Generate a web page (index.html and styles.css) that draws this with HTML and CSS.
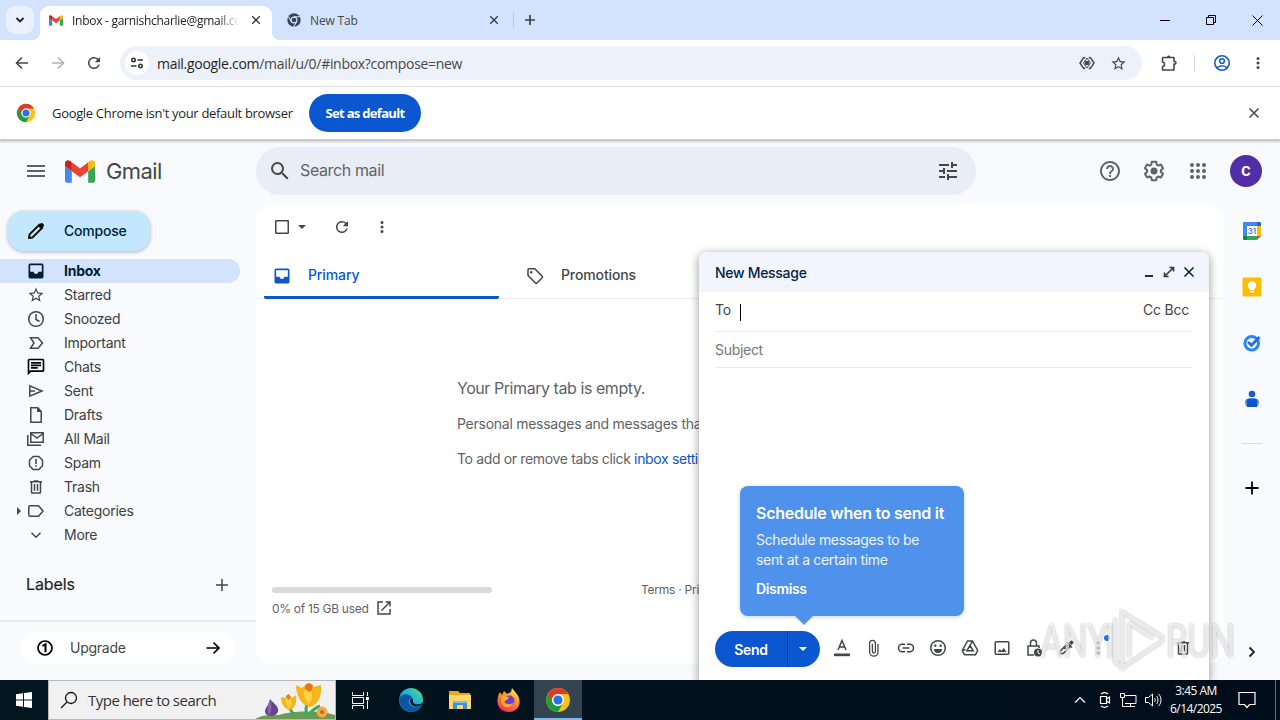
FILE: index.html
```
<!DOCTYPE html>
<html lang="en">
<head>
  <meta charset="UTF-8" />
  <meta name="viewport" content="width=device-width, initial-scale=1.0"/>
  <title>Inbox - Gmail</title>
  <link rel="stylesheet" href="styles.css">
</head>

<body>
  <!-- shared icons -->
  <svg class="defs" width="0" height="0">
    <symbol id="i-close" viewBox="0 0 12 12"><path d="M1.5 1.5l9 9M10.5 1.5l-9 9" fill="none" stroke="currentColor" stroke-width="1.5"/></symbol>
    <symbol id="i-dots" viewBox="0 0 24 24"><path d="M12 8a2 2 0 1 0 0-4 2 2 0 0 0 0 4zm0 2a2 2 0 1 0 0 4 2 2 0 0 0 0-4zm0 6a2 2 0 1 0 0 4 2 2 0 0 0 0-4z"/></symbol>
    <symbol id="i-refresh" viewBox="0 0 24 24"><path d="M17.65 6.35A7.958 7.958 0 0 0 12 4c-4.42 0-7.99 3.58-7.99 8s3.57 8 7.99 8c3.73 0 6.84-2.55 7.73-6h-2.08A5.99 5.99 0 0 1 12 18c-3.31 0-6-2.69-6-6s2.69-6 6-6c1.66 0 3.14.69 4.22 1.78L13 11h7V4l-2.35 2.35z"/></symbol>
    <symbol id="i-star" viewBox="0 0 24 24"><path d="M22 9.24l-7.19-.62L12 2 9.19 8.63 2 9.24l5.46 4.73L5.82 21 12 17.27 18.18 21l-1.63-7.03L22 9.24zM12 15.4l-3.76 2.27 1-4.28-3.32-2.88 4.38-.38L12 6.1l1.71 4.04 4.38.38-3.32 2.88 1 4.28L12 15.4z"/></symbol>
    <symbol id="i-inbox" viewBox="0 0 24 24"><path d="M19 3H5a2 2 0 0 0-2 2v14a2 2 0 0 0 2 2h14a2 2 0 0 0 2-2V5a2 2 0 0 0-2-2zm0 10h-4.200c0 1.500-1.250 2.700-2.800 2.700S9.200 14.500 9.200 13H5V5h14v8z"/></symbol>
    <symbol id="i-trash" viewBox="0 0 24 24"><path d="M15 3H9v1H4v2h1v13c0 1.1.9 2 2 2h10c1.1 0 2-.9 2-2V6h1V4h-5V3zM7 6h10v13H7V6zm2 2h2v9H9V8zm4 0h2v9h-2V8z"/></symbol>
    <symbol id="i-gmail" viewBox="0 0 88 66"><path fill="#4285f4" d="M6 66h14V32L0 17v43c0 3.3 2.7 6 6 6z"/><path fill="#34a853" d="M68 66h14c3.3 0 6-2.7 6-6V17L68 32z"/><path fill="#fbbc04" d="M68 6v26l20-15V9c0-7.400-8.500-11.700-14.400-7.200z"/><path fill="#ea4335" d="M20 32V6l24 18L68 6v26L44 50z"/><path fill="#c5221f" d="M0 9v8l20 15V6l-5.600-4.200C8.500-2.700 0 1.600 0 9z"/></symbol>
    <symbol id="i-chrome" viewBox="0 0 48 48"><circle cx="24" cy="24" r="22" fill="#fbc116"/><path fill="#db3a2e" d="M4.950 13a22 22 0 0 1 38.100 0H24a11 11 0 0 0-9.500 16.500z"/><path fill="#229a45" d="M4.950 13a22 22 0 0 0 19.050 33l9.530-16.500a11 11 0 0 1-19.060 0z"/><circle cx="24" cy="24" r="11" fill="#fff"/><circle cx="24" cy="24" r="8.500" fill="#2572eb"/></symbol>
  </svg>

  <div class="screen">
    <div class="tabstrip">
      <div class="tab-search"><svg width="10" height="8" viewBox="0 0 10 8"><path d="M1.500 2l3.500 3.500L8.500 2" fill="none" stroke="#1f1f1f" stroke-width="1.800"/></svg></div>
      <div class="tab active">
        <svg width="14" height="11"><use href="#i-gmail"/></svg>
        <span class="tab-title fade">Inbox - garnishcharlie@gmail.co</span>
        <svg class="tab-x" width="10" height="10"><use href="#i-close"/></svg>
      </div>
      <div class="tab">
        <svg width="14" height="14" viewBox="0 0 48 48"><circle cx="24" cy="24" r="23" fill="#3c4451"/><circle cx="24" cy="24" r="10" fill="none" stroke="#d5e3fd" stroke-width="4"/><path d="M24 13h20M14.500 29.500L5 12M33.500 29.500L23 47" stroke="#d5e3fd" stroke-width="3.500"/></svg>
        <span class="tab-title">New Tab</span>
        <svg class="tab-x" width="10" height="10"><use href="#i-close"/></svg>
      </div>
      <div class="tab-sep"></div>
      <svg class="new-tab" width="12" height="12" viewBox="0 0 12 12"><path d="M6 1v10M1 6h10" stroke="#3c4043" stroke-width="1.700"/></svg>
      <div class="win-buttons">
        <svg width="11" height="11" viewBox="0 0 11 11"><path d="M0 5.500h10" stroke="#000"/></svg>
        <svg width="11" height="11" viewBox="0 0 11 11"><path d="M.5 2.500h7v7h-7zM2.500 2.500v-2h7v7h-2" fill="none" stroke="#000"/></svg>
        <svg width="11" height="11" viewBox="0 0 11 11"><path d="M.5.5l10 10M10.500.5l-10 10" stroke="#000"/></svg>
      </div>
    </div>

    <div class="toolbar">
      <svg class="nav" width="16" height="16" viewBox="0 0 16 16"><path d="M14 8H3M8 2.500L2.500 8 8 13.500" fill="none" stroke="#474747" stroke-width="1.600"/></svg>
      <svg class="nav" width="16" height="16" viewBox="0 0 16 16"><path d="M2 8h11M8 2.500L13.500 8 8 13.500" fill="none" stroke="#b4b4b4" stroke-width="1.600"/></svg>
      <svg class="nav" width="18" height="18" fill="#474747"><use href="#i-refresh"/></svg>
      <div class="omnibox">
        <div class="site-info"><svg width="14" height="12" viewBox="0 0 14 12"><g fill="none" stroke="#303134" stroke-width="1.600"><circle cx="3.500" cy="3" r="1.700"/><path d="M7.500 3H13M1 9h5.500"/><circle cx="10.500" cy="9" r="1.700"/></g></svg></div>
        <div class="url"><b>mail.google.com</b>/mail/u/0/#inbox?compose=new</div>
        <svg class="eye" width="16" height="14" viewBox="0 0 16 14"><path d="M6.200 1.800Q5 1.300 4.200 2.200L1 7l3.200 4.800q.8.900 2 .4M9.800 1.800q1.200-.5 2 .4L15 7l-3.200 4.800q-.8.900-2 .4" fill="none" stroke="#474747" stroke-width="1.500"/><path d="M8 2L4.500 7 8 12l3.500-5z" fill="none" stroke="#474747" stroke-width="1"/><circle cx="8" cy="7" r="2.300" fill="#474747"/></svg>
        <svg width="17" height="17" fill="#474747"><use href="#i-star"/></svg>
      </div>
      <svg class="puzzle" width="18" height="18" viewBox="0 0 18 18"><path d="M3.200 3.500H14v4h.8c1.500 0 1.500 2.600 0 2.600H14V16H2.500v-3.300c2.600-.3 2.600-4.400 0-4.700V4.200c0-.4.300-.7.700-.7z" fill="none" stroke="#474747" stroke-width="1.600" stroke-linejoin="round"/><path d="M7 3.500c0-2.600 3.400-2.600 3.400 0z" fill="#474747"/></svg>
      <div class="bar-sep"></div>
      <svg class="profile" width="18" height="18" viewBox="0 0 18 18"><g fill="none" stroke="#1a5cc8" stroke-width="1.600"><circle cx="9" cy="9" r="7.200"/><circle cx="9" cy="7" r="2.300"/><path d="M3.800 14c2.500-3 7.900-3 10.400 0"/></g></svg>
      <svg width="18" height="18" fill="#474747"><use href="#i-dots"/></svg>
    </div>

    <div class="infobar">
      <svg width="20" height="20"><use href="#i-chrome"/></svg>
      <span class="info-text">Google Chrome isn't your default browser</span>
      <button class="default-btn">Set as default</button>
      <svg class="info-close" width="12" height="12"><use href="#i-close"/></svg>
    </div>

    <div class="gmail">
      <header>
        <div class="brand">
          <svg width="24" height="24" viewBox="0 0 24 24" fill="#5f6368"><path d="M3 18h18v-2H3v2zm0-5h18v-2H3v2zm0-7v2h18V6H3z"/></svg>
          <svg class="gmail-logo" width="30" height="23"><use href="#i-gmail"/></svg>
          <span class="brand-name">Gmail</span>
        </div>
        <div class="search">
          <svg width="24" height="24" viewBox="0 0 24 24" fill="#444746"><path d="M15.500 14h-.79l-.28-.27A6.471 6.471 0 0 0 16 9.500 6.500 6.500 0 1 0 9.500 16c1.610 0 3.090-.59 4.230-1.570l.27.28v.79l5 4.990L20.490 19l-4.990-5zm-6 0C7.010 14 5 11.990 5 9.500S7.010 5 9.500 5 14 7.010 14 9.500 11.990 14 9.500 14z"/></svg>
          <span class="search-text">Search mail</span>
          <svg class="tune" width="24" height="24" viewBox="0 0 24 24" fill="#444746"><path d="M3 17v2h6v-2H3zM3 5v2h10V5H3zm10 16v-2h8v-2h-8v-2h-2v6h2zM7 9v2H3v2h4v2h2V9H7zm14 4v-2H11v2h10zm-6-4h2V7h4V5h-4V3h-2v6z"/></svg>
        </div>
        <div class="header-icons">
          <svg width="24" height="24" viewBox="0 0 24 24" fill="#5f6368"><path d="M11 18h2v-2h-2v2zm1-16C6.480 2 2 6.480 2 12s4.480 10 10 10 10-4.480 10-10S17.520 2 12 2zm0 18c-4.410 0-8-3.590-8-8s3.590-8 8-8 8 3.590 8 8-3.590 8-8 8zm0-14c-2.210 0-4 1.790-4 4h2c0-1.100.9-2 2-2s2 .9 2 2c0 2-3 1.750-3 5h2c0-2.250 3-2.500 3-5 0-2.210-1.790-4-4-4z"/></svg>
          <svg width="24" height="24" viewBox="0 0 24 24" fill="#5f6368"><path d="M13.850 22.250h-3.700c-.74 0-1.360-.54-1.450-1.270l-.27-1.890c-.27-.14-.53-.29-.79-.46l-1.800.72c-.7.26-1.470-.03-1.810-.65L2.200 15.530c-.35-.66-.2-1.440.36-1.880l1.530-1.190c-.01-.15-.02-.3-.02-.46 0-.15.01-.31.02-.46l-1.520-1.190c-.59-.45-.74-1.260-.37-1.880l1.850-3.190c.34-.62 1.110-.9 1.790-.63l1.810.73c.26-.17.52-.32.78-.46l.27-1.910c.09-.7.71-1.250 1.440-1.250h3.700c.74 0 1.360.54 1.450 1.270l.27 1.890c.27.14.53.29.79.46l1.800-.72c.71-.26 1.480.03 1.820.65l1.840 3.180c.36.66.2 1.440-.36 1.880l-1.520 1.190c.01.15.02.3.02.46s-.01.31-.02.46l1.520 1.190c.56.45.72 1.230.37 1.860l-1.860 3.220c-.34.62-1.110.9-1.800.63l-1.800-.72c-.26.17-.52.32-.78.46l-.27 1.910c-.1.680-.72 1.220-1.460 1.220zm-3.230-2h2.760l.37-2.550.53-.22c.44-.18.88-.44 1.340-.78l.45-.34 2.380.96 1.380-2.400-2.030-1.580.07-.56c.03-.26.06-.51.06-.78s-.03-.53-.06-.78l-.07-.56 2.030-1.580-1.390-2.400-2.390.96-.45-.35c-.42-.32-.87-.58-1.330-.77l-.52-.22-.37-2.550h-2.760l-.37 2.550-.53.21c-.44.19-.88.44-1.340.79l-.45.33-2.380-.95-1.390 2.390 2.030 1.580-.07.56a7 7 0 0 0-.06.79c0 .26.02.53.06.78l.07.56-2.030 1.580 1.380 2.400 2.390-.96.45.35c.43.33.86.58 1.330.77l.53.22.38 2.550z"/><circle cx="12" cy="12" r="3.500"/></svg>
          <svg width="24" height="24" viewBox="0 0 24 24" fill="#5f6368"><path d="M6 8a2 2 0 1 0 0-4 2 2 0 0 0 0 4zm6 0a2 2 0 1 0 0-4 2 2 0 0 0 0 4zm6 0a2 2 0 1 0 0-4 2 2 0 0 0 0 4zM6 14a2 2 0 1 0 0-4 2 2 0 0 0 0 4zm6 0a2 2 0 1 0 0-4 2 2 0 0 0 0 4zm6 0a2 2 0 1 0 0-4 2 2 0 0 0 0 4zM6 20a2 2 0 1 0 0-4 2 2 0 0 0 0 4zm6 0a2 2 0 1 0 0-4 2 2 0 0 0 0 4zm6 0a2 2 0 1 0 0-4 2 2 0 0 0 0 4z"/></svg>
          <div class="avatar">c</div>
        </div>
      </header>

      <div class="content">
        <nav class="sidebar">
          <div class="compose-btn">
            <svg width="20" height="20" viewBox="0 0 20 20"><path d="M3 17l.6-3.600L13.400 3.600l3 3L6.600 16.400z" fill="none" stroke="#0b0d10" stroke-width="2" stroke-linejoin="round"/><path d="M12 5l2.700-2.700c.5-.5 1.200-.5 1.700 0l1.300 1.300c.5.5.5 1.200 0 1.700L15 8z" fill="#0b0d10"/></svg>
            <span>Compose</span>
          </div>
          <ul class="folders">
            <li class="selected"><svg width="20" height="20" fill="#001d35"><use href="#i-inbox"/></svg><span>Inbox</span></li>
            <li><svg width="18" height="18" fill="#444746"><use href="#i-star"/></svg><span>Starred</span></li>
            <li><svg width="20" height="20" viewBox="0 0 20 20"><g class="line"><circle cx="10" cy="10" r="7.300"/><path d="M10 5v5.500l3.500 2"/></g></svg><span>Snoozed</span></li>
            <li><svg width="20" height="20" viewBox="0 0 20 20"><path class="line" d="M4.500 4.700H12l4.500 5.300-4.500 5.300H4.500L8 10z"/></svg><span>Important</span></li>
            <li><svg width="20" height="20" viewBox="0 0 24 24"><path d="M4 4h16v12H5.170L4 17.170V4m0-2c-1.100 0-1.990.9-1.990 2L2 22l4-4h14c1.100 0 2-.9 2-2V4c0-1.100-.9-2-2-2H4zm2 10h8v2H6v-2zm0-3h12v2H6V9zm0-3h12v2H6V6z"/></svg><span>Chats</span></li>
            <li><svg width="20" height="20" viewBox="0 0 20 20"><path class="line" d="M3.800 4.800v10.400L16 10zM4 10h5"/></svg><span>Sent</span></li>
            <li><svg width="20" height="20" viewBox="0 0 20 20"><path class="line" d="M4.800 2.800h7l3.400 3.700v10.700H4.800z"/><path d="M11 2l5 5h-5z" fill="#444746"/></svg><span>Drafts</span></li>
            <li><svg width="20" height="20" viewBox="0 0 20 20"><path class="line" d="M4.800 3.800h12.400v9.400H4.800zM4.800 4.500l6.200 4.500 6.200-4.500M1.800 6v10.200H15"/></svg><span>All Mail</span></li>
            <li><svg width="20" height="20" viewBox="0 0 20 20"><path class="line" d="M7.200 3.500h5.600l3.700 3.700v5.600l-3.700 3.700H7.200l-3.700-3.700V7.200z"/><path d="M9.200 6h1.600v5H9.200zM9.200 12.200h1.600v1.600H9.200z" fill="#444746"/></svg><span>Spam</span></li>
            <li><svg width="18" height="18" fill="#444746"><use href="#i-trash"/></svg><span>Trash</span></li>
            <li class="expandable"><svg width="20" height="20" viewBox="0 0 20 20"><path class="line" d="M4 4.800h8.500l4.500 5.200-4.500 5.200H4c-1 0-1.200-.5-1.200-1.200V6c0-.8.4-1.200 1.200-1.200z"/></svg><span>Categories</span></li>
            <li><svg width="20" height="20" viewBox="0 0 20 20"><path class="line" d="M5.500 7.800L10 12.300l4.500-4.500"/></svg><span>More</span></li>
          </ul>
          <div class="labels">
            <span>Labels</span>
            <svg width="20" height="20" viewBox="0 0 20 20"><path class="line" d="M10 4v12M4 10h12"/></svg>
          </div>
          <div class="upgrade-area">
            <div class="upgrade">
              <svg width="18" height="18" viewBox="0 0 18 18"><g fill="none" stroke="#000"><circle cx="9" cy="9" r="7" stroke-width="1.700"/><path d="M6.500 7L9.500 5.200v8" stroke-width="2"/></g></svg>
              <span>Upgrade</span>
              <svg class="arrow" width="16" height="16" viewBox="0 0 16 16"><path d="M1.500 8H14M8.500 2.500L14 8l-5.500 5.500" fill="none" stroke="#000" stroke-width="1.700"/></svg>
            </div>
          </div>
        </nav>

        <main>
          <div class="list-tools">
            <svg width="16" height="16" viewBox="0 0 16 16"><rect x="1.750" y="1.750" width="12.500" height="12.500" rx=".5" fill="none" stroke="#444746" stroke-width="1.500"/></svg>
            <i class="caret"></i>
            <svg class="reload" width="18" height="18" fill="#444746"><use href="#i-refresh"/></svg>
            <svg width="18" height="18" fill="#444746"><use href="#i-dots"/></svg>
          </div>
          <div class="tabs">
            <div class="mail-tab current"><svg width="20" height="20" fill="#0b57d0"><use href="#i-inbox"/></svg><span>Primary</span></div>
            <div class="mail-tab"><svg width="20" height="20" viewBox="0 0 20 20"><path class="line" d="M3 4c0-.7.4-1.200 1.200-1.200h5.600l7.400 7.400c.5.5.5 1 0 1.500L12 17c-.5.500-1 .5-1.500 0L3 9.500z"/><circle cx="6.200" cy="6.200" r="1.200" fill="#444746"/></svg><span>Promotions</span></div>
          </div>
          <div class="empty">
            <p class="empty-title">Your Primary tab is empty.</p>
            <p>Personal messages and messages that don't appear in other tabs will be shown here.</p>
            <p class="tabs-hint">To add or remove tabs click <a>inbox settings</a>.</p>
          </div>
          <div class="footer">
            <div>
              <div class="quota"></div>
              <div class="used">0% of 15 GB used <svg width="16" height="16" viewBox="0 0 16 16"><path class="line" d="M7 2H2v12h12V9M9.500 2H14v4.500M14 2L5.500 10.500"/></svg></div>
            </div>
            <span class="terms">Terms · Privacy</span>
          </div>
        </main>

        <aside>
          <svg width="20" height="20" viewBox="0 0 20 20"><path fill="#4285f4" d="M1 2.500C1 1.500 1.500 1 2.500 1H15v4H5v10H1z"/><path fill="#1967d2" d="M15 1h2.500c1 0 1.500.5 1.500 1.500V5h-4z"/><path fill="#fbbc04" d="M15 5h4v10h-4z"/><path fill="#34a853" d="M5 15h10v4H5z"/><path fill="#188038" d="M1 15h4v4H2.500C1.500 19 1 18.500 1 17.500z"/><path fill="#ea4335" d="M15 15h4l-4 4z"/><path fill="#fff" d="M5 5h10v10H5z"/><text class="cal-day" x="10" y="13" text-anchor="middle">31</text></svg>
          <svg width="20" height="20" viewBox="0 0 20 20"><rect x=".5" y=".5" width="19" height="19" rx="1.500" fill="#fbbc04"/><path fill="#fff" d="M10 4.300a4.200 4.200 0 0 0-2.300 7.700v1.300h4.600V12A4.200 4.200 0 0 0 10 4.300zM8 14h4v1.500H8z"/></svg>
          <svg width="20" height="20" viewBox="0 0 20 20"><circle cx="9.700" cy="10.300" r="6.800" fill="none" stroke="#2684fc" stroke-width="3"/><path d="M6 9l3.500 3.300L17.500 4" fill="none" stroke="#1f6fe5" stroke-width="2.800"/></svg>
          <svg width="20" height="20" viewBox="0 0 20 20"><circle cx="10" cy="5" r="3.300" fill="#1a5cc8"/><path d="M3 13c0-2.500 2-3.500 4-3.500h6c2 0 4 1 4 3.500 0 3-1.500 5-4 5H7c-2.500 0-4-2-4-5z" fill="#4f8df5"/><path d="M5 12c0-1.800 1.200-2.500 3-2.500h4c1.800 0 3 .7 3 2.500v6H5z" fill="#1055c8"/></svg>
          <hr>
          <svg class="add" width="16" height="16" viewBox="0 0 16 16"><path d="M8 1.500v13M1.500 8h13" stroke="#000" stroke-width="1.800"/></svg>
          <svg class="chevron" width="10" height="12" viewBox="0 0 10 12"><path d="M2.500 1.500L7 6l-4.500 4.500" fill="none" stroke="#1f1f1f" stroke-width="1.800"/></svg>
        </aside>
      </div>

      <!-- new message window over the list -->
      <section class="compose">
        <div class="compose-head">
          <span>New Message</span>
          <svg width="10" height="12" viewBox="0 0 10 12"><path d="M1 10h8" stroke="#1f2d3d" stroke-width="2"/></svg>
          <svg width="12" height="12" viewBox="0 0 12 12"><path d="M6.500 1.500h4v4M10.500 1.500l-9 9M1.500 6.500v4h4" fill="none" stroke="#333c48" stroke-width="1.700"/></svg>
          <svg width="12" height="12"><use href="#i-close"/></svg>
        </div>
        <div class="field to"><span>To</span><i class="cursor"></i><span class="cc">Cc Bcc</span></div>
        <div class="field subject">Subject</div>
        <div class="message-body"></div>
        <div class="compose-tools">
          <div class="send"><span>Send</span><div class="send-more"><i class="caret"></i></div></div>
          <div class="icons">
            <svg width="20" height="20" viewBox="0 0 20 20"><path d="M6 12L10 2.500 14 12M7.500 9h5" class="line"/><path d="M2 15.500h16v2.700H2z" fill="#444746"/></svg>
            <svg width="20" height="20" viewBox="0 0 20 20"><path class="line thin" d="M14 6v8a4.200 4.200 0 0 1-8.400 0V5.200a2.900 2.900 0 0 1 5.800 0V13.500a1.500 1.500 0 0 1-3 0V6"/></svg>
            <svg width="20" height="20" viewBox="0 0 20 20"><path class="line" d="M9 6.300H6.200a3.700 3.700 0 0 0 0 7.400H9M11 6.300h2.800a3.700 3.700 0 0 1 0 7.400H11M6.500 10h7"/></svg>
            <svg width="20" height="20" viewBox="0 0 20 20"><circle class="line" cx="10" cy="10" r="7.300"/><path d="M6 11h8a4 4 0 0 1-8 0z" fill="#444746"/><circle cx="7.300" cy="7.700" r="1.200" fill="#444746"/><circle cx="12.700" cy="7.700" r="1.200" fill="#444746"/></svg>
            <svg width="20" height="20" viewBox="0 0 20 20"><path class="line" d="M7.500 3h5l5.200 9.500-2.200 4.200h-11L2.300 12.500zM10 7.500l3.200 5.300H6.800zM2.500 12.500l3-1M12.500 3l-2.300 4"/></svg>
            <svg width="20" height="20" viewBox="0 0 20 20"><rect class="line" x="3.200" y="3.700" width="13.600" height="12.600" rx="1"/><path d="M5.500 14l2.300-3 1.700 1.800 2.300-2.800 2.700 4z" fill="#444746"/></svg>
            <svg width="20" height="20" viewBox="0 0 20 20"><path class="line" d="M10 17H4V8h11v2M6.500 8V5a3 3 0 0 1 6 0v3"/><circle cx="14" cy="14.500" r="4" fill="#444746"/><path d="M14 12v3l2 1" stroke="#fff" fill="none"/></svg>
            <svg width="20" height="20" viewBox="0 0 20 20"><path class="line" d="M4 16l.8-3.500L12 5.300l2.700 2.700-7.200 7.200zM10.500 4l5.500 5.500"/><path d="M7 11l5-5 2 2-3 3zM13 4.500l1.500-1.500c.6-.6 1.200-.6 1.800 0l.8.800c.5.500.5 1.100 0 1.700L15.500 7z" fill="#444746"/></svg>
            <svg width="20" height="20" fill="#444746"><use href="#i-dots"/></svg>
          </div>
          <i class="new-dot"></i>
          <svg class="discard" width="18" height="18" fill="#444746"><use href="#i-trash"/></svg>
        </div>
        <div class="tip">
          <div class="tip-title">Schedule when to send it</div>
          <div class="tip-text">Schedule messages to be<br>sent at a certain time</div>
          <div class="tip-dismiss">Dismiss</div>
        </div>
      </section>
    </div>

    <div class="taskbar">
      <div class="start"><svg width="16" height="16" viewBox="0 0 16 16" fill="#fff"><path d="M0 2.200L7 1.200v6.300H0zM8 1.100L16 0v7.500H8zM0 8.500h7v6.300L0 13.800zM8 8.500h8V16l-8-1.100z"/></svg></div>
      <div class="task-search">
        <svg width="18" height="18" viewBox="0 0 18 18"><circle cx="11" cy="7" r="5.500" fill="none" stroke="#111" stroke-width="1.300"/><path d="M7 11l-6 6" stroke="#111" stroke-width="1.300"/></svg>
        <span>Type here to search</span>
        <svg class="flowers" width="80" height="38" viewBox="0 0 80 38"><path fill="#6c9a56" d="M0 38c8-5 18-4 24-4 12-4 38-5 56 0v4z"/><path d="M39 35c-2-5-4-7-6-10M52 35c-2-6-1-10 1-14M53 35c4-6 7-8 12-10" stroke="#3daa5a" stroke-width="3" fill="none"/><path fill="#66458f" d="M10 31c0-5 4-6 5-13 3 4 9 7 8 12-1 6-12 7-13 1z"/><path fill="#8b66b0" d="M15 19c-3 5-3 10-1 15 3-4 3-10 1-15z"/><path fill="#f6b51c" d="M26 16l4 1 3-4 4 4 4-3c1 5 0 13-6 15-6-1-9-7-9-13zM41 4l6 3 6-5 5 4 8-2c1 9-2 20-11 22C46 24 41 14 41 4z"/><path fill="#ffd447" d="M32 15c-2 4-1 8 2 12 3-4 3-8 1-12zM50 8c-2 7 1 11 4 15 4-5 4-11 1-15z"/><path fill="#e97818" d="M50 4l4-2 4 2-1 5-3 2-4-3zM31 15l3-2 2 4-3 2z"/><circle cx="67" cy="31" r="5.500" fill="#f4a848"/><circle cx="67" cy="31" r="2" fill="#c86c1c"/></svg>
      </div>
      <div class="task-item view"><svg width="17" height="17" viewBox="0 0 17 17"><path d="M.5 0v3.500h11V0M.5 17v-3.500h11V17M.5 5.500h11v6H.5zM15.500 0v4M15.500 8.500V17" fill="none" stroke="#fff"/><path d="M14 5h3v3h-3z" fill="#fff"/></svg></div>
      <div class="task-item"><svg width="26" height="26" viewBox="0 0 26 26"><defs><linearGradient id="edge" x1="0" x2="1" y1="1" y2="0"><stop offset="0" stop-color="#0868c5"/><stop offset=".5" stop-color="#1baee0"/><stop offset="1" stop-color="#56df75"/></linearGradient></defs><circle cx="13" cy="13" r="12" fill="url(#edge)"/><path fill="#0b56a4" d="M1.200 11c3-5 11-5 12.800 0-5 1-4 8 2 9 3 .5 6-.5 8-2-3 6-9 8-14 6C4 22 1 17 1.200 11z"/><path fill="#03141e" d="M14 11c2 2 0 4 2 5.500 2 1.300 6 1.200 9-1-1 3-4 4.500-8 4-4-.6-7-6-3-8.500z"/></svg></div>
      <div class="task-item"><svg width="22" height="20" viewBox="0 0 22 20"><path fill="#e8a724" d="M0 1h9l2 2h10v4H0z"/><path fill="#ffd667" d="M0 5h22v14H0z"/><path fill="#3d91d4" d="M4 11h14v8h-4v-4H8v4H4z"/><path fill="#78bdea" d="M4 11h14v2H4z"/></svg></div>
      <div class="task-item"><svg width="24" height="25" viewBox="0 0 24 25"><defs><linearGradient id="fox" x1=".8" x2=".3" y1="0" y2="1"><stop offset="0" stop-color="#fff044"/><stop offset=".45" stop-color="#ff9328"/><stop offset="1" stop-color="#f22b61"/></linearGradient></defs><path fill="url(#fox)" d="M3 4l2 3 2-4 3 3 4-2 1-4 4 5c6 6 5 18-7 19C0 24-2 12 3 4z"/><circle cx="12.500" cy="12.500" r="5" fill="#7040c8"/><path fill="#ffae2b" d="M5 8l7 1-2 3-3 1c1 4 6 4 9 2-2 5-10 6-12-1z"/></svg></div>
      <div class="task-item running"><svg width="26" height="26"><use href="#i-chrome"/></svg></div>
      <div class="tray">
        <svg width="12" height="8" viewBox="0 0 12 8"><path d="M1 6.500l5-5 5 5" fill="none" stroke="#fff" stroke-width="1.200"/></svg>
        <svg width="14" height="16" viewBox="0 0 14 16"><path d="M2.500 4.500h6v7h-6zM8.500 7l3-2v6l-3-2M3 2c2-1.500 5-1.500 7 0M3 14c2 1.500 5 1.500 7 0" fill="none" stroke="#fff" stroke-width="1.200"/></svg>
        <svg width="17" height="16" viewBox="0 0 17 16"><path d="M5 3.500h11v8H5M10.500 12v2M6 14.500h9M.5 1.500h4v4h-4zM2.500 5.500v9h3" fill="none" stroke="#fff"/></svg>
        <svg width="17" height="16" viewBox="0 0 17 16"><path d="M.5 5.500h3l4-3.500v12l-4-3.500h-3zM9.500 6c1 1 1 3 0 4M11.500 4c2 2 2 6 0 8M13.500 2c3.300 3 3.300 9 0 12" fill="none" stroke="#fff"/></svg>
        <div class="clock"><div>3:45 AM</div><div>6/14/2025</div></div>
        <svg class="notes" width="18" height="18" viewBox="0 0 18 18"><path d="M1 1.500h16v12h-5.500L9 16.500l-2.500-3H1z" fill="none" stroke="#fff" stroke-width="1.200"/></svg>
      </div>
    </div>

    <div class="watermark">
      <span>ANY</span>
      <svg width="58" height="64" viewBox="0 0 58 64"><path d="M14 3l39 24c2 2 2 4 0 6L14 59V3zM21 14l24 15M21 14v34M7 9v44l10 7M2 15v34" fill="none"/></svg>
      <span>RUN</span>
    </div>
  </div>
</body>
</html>
```
FILE: styles.css
```
body {
  margin: 0;
  overflow: hidden;
  font-family: Inter, Arial, sans-serif;
  color: #444746;
}

svg {
  flex-shrink: 0;
}

.defs {
  position: absolute;
}

.line {
  fill: none;
  stroke: #444746;
  stroke-width: 1.5;
}

.thin {
  stroke-width: 1.3;
}

.screen {
  position: relative;
  width: 1280px;
  height: 720px;
  display: flex;
  flex-direction: column;
  overflow: hidden;
}

/* browser */
.tabstrip, .toolbar, .infobar, .taskbar {
  font-family: "Open Sans", "Noto Sans", sans-serif;
}

.tabstrip {
  height: 40px;
  box-sizing: border-box;
  background: #d3e3fd;
  display: flex;
  align-items: center;
  padding-left: 6px;
  flex-shrink: 0;
}

.tab-search {
  width: 28px;
  height: 28px;
  border-radius: 9px;
  background: #e9f1fe;
  display: flex;
  align-items: center;
  justify-content: center;
  margin-right: 6px;
}

.tab {
  position: relative;
  width: 212px;
  height: 28px;
  margin-top: 6px;
  padding: 0 11px 6px 9px;
  display: flex;
  align-items: center;
  font-size: 12px;
  color: #474747;
}

.tab.active {
  width: 212px;
  background: #fff;
  border-radius: 9px 9px 0 0;
  color: #1f1f1f;
  margin-right: 6px;
}

/* curved feet of the active tab */
.active::before, .active::after {
  content: "";
  position: absolute;
  bottom: 0;
  width: 8px;
  height: 8px;
}

.active::before {
  left: -8px;
  background: radial-gradient(circle at 0 0, transparent 8px, #fff 8px);
}

.active::after {
  right: -8px;
  background: radial-gradient(circle at 100% 0, transparent 8px, #fff 8px);
}

.tab-title {
  flex: 1;
  margin-left: 9px;
  margin-right: 12px;
  white-space: nowrap;
  overflow: hidden;
  letter-spacing: -0.15px;
}

.fade {
  letter-spacing: -0.28px;
  -webkit-mask-image: linear-gradient(90deg, #000 88%, transparent);
  mask-image: linear-gradient(90deg, #000 88%, transparent);
}

.tab-x {
  color: #333;
}

.tab-sep {
  width: 1px;
  height: 16px;
  background: #a8c7fa;
  margin-left: 3px;
}

.new-tab {
  margin-left: 10px;
}

.win-buttons {
  margin-left: auto;
  margin-right: 17px;
  display: flex;
  gap: 35px;
}

.toolbar {
  height: 47px;
  box-sizing: border-box;
  border-bottom: 1px solid #dcdee2;
  background: #fff;
  display: flex;
  align-items: center;
  padding: 0 13px 0 14px;
  flex-shrink: 0;
}

.nav {
  margin-right: 20px;
}

.nav + .nav + .nav {
  margin-right: 17px;
  margin-left: -1px;
}

.omnibox {
  width: 1022px;
  height: 34px;
  box-sizing: border-box;
  border-radius: 17px;
  background: #edf1fa;
  display: flex;
  align-items: center;
  padding: 0 15px 0 5px;
}

.site-info {
  width: 24px;
  height: 24px;
  border-radius: 50%;
  background: #fff;
  display: flex;
  align-items: center;
  justify-content: center;
}

.url {
  flex: 1;
  margin-left: 8px;
  font-size: 14px;
  letter-spacing: -0.3px;
  color: #474747;
}

.url b {
  font-weight: normal;
  color: #1f1f1f;
}

.eye {
  margin-right: 15px;
}

.puzzle {
  margin-left: 18px;
}

.bar-sep {
  width: 1px;
  height: 16px;
  background: #c7d7f5;
  margin: 0 18px 0 16px;
}

.profile {
  margin-right: 18px;
}

.infobar {
  height: 52px;
  background: #fff;
  display: flex;
  align-items: center;
  padding: 0 20px 0 16px;
  border-bottom: 2px solid #cdcdcd;
  box-shadow: 0 1px 2px #ccc;
  position: relative;
  z-index: 1;
  flex-shrink: 0;
}

.info-text {
  margin-left: 16px;
  width: 257px;
  font-size: 13px;
  letter-spacing: -0.32px;
  white-space: nowrap;
  color: #1f1f1f;
}

.default-btn {
  width: 112px;
  height: 38px;
  border: 0;
  border-radius: 19px;
  background: #0b57d0;
  color: #fff;
  font: 700 13px "Open Sans", sans-serif;
  letter-spacing: -0.68px;
  padding: 0;
}

.info-close {
  margin-left: auto;
  color: #474747;
}

/* gmail */
.gmail {
  position: relative;
  height: 539px;
  background: #f8fafd;
  display: flex;
  flex-direction: column;
  overflow: hidden;
}

header {
  height: 63px;
  display: flex;
  align-items: center;
  box-sizing: border-box;
  padding-bottom: 3px;
  flex-shrink: 0;
}

.brand {
  width: 256px;
  box-sizing: border-box;
  padding-left: 24px;
  display: flex;
  align-items: center;
}

.gmail-logo {
  margin-left: 17px;
}

.brand-name {
  margin-left: 11px;
  font-size: 22px;
  letter-spacing: -0.6px;
}

.search {
  width: 720px;
  height: 48px;
  box-sizing: border-box;
  padding: 0 16px 0 12px;
  border-radius: 24px;
  background: #e9eef6;
  display: flex;
  align-items: center;
}

.search-text {
  flex: 1;
  margin-left: 8px;
  padding-bottom: 2px;
  font-size: 16px;
  letter-spacing: -0.38px;
  color: #5f6368;
}

.header-icons {
  margin-left: auto;
  margin-right: 18px;
  display: flex;
  align-items: center;
  gap: 20px;
}

.avatar {
  width: 32px;
  height: 32px;
  line-height: 31px;
  border-radius: 50%;
  background: #512da8;
  color: #fff;
  font-size: 17px;
  font-weight: 600;
  text-align: center;
}

.content {
  flex: 1;
  display: flex;
  min-height: 0;
}

.sidebar {
  width: 256px;
  display: flex;
  flex-direction: column;
}

.compose-btn {
  width: 142px;
  height: 40px;
  box-sizing: border-box;
  margin: 7px 0 0 8px;
  padding-left: 18px;
  border-radius: 16px;
  background: #c2e7ff;
  box-shadow: 0 1px 3px 1px rgba(60,64,67,0.25);
  display: flex;
  align-items: center;
  font-size: 14px;
  font-weight: 500;
  color: #001d35;
}

.compose-btn span {
  margin-left: 18px;
  padding-bottom: 2px;
  letter-spacing: -0.2px;
}

.folders {
  list-style: none;
  margin: 8px 0 0;
  padding: 0;
}

.folders li {
  position: relative;
  width: 240px;
  height: 24px;
  box-sizing: border-box;
  padding-left: 26px;
  display: flex;
  align-items: center;
  font-size: 14px;
  letter-spacing: -0.25px;
  color: #3c4043;
}

.folders span {
  padding-bottom: 2px;
}

.folders svg {
  margin-right: 18px;
}

.folders svg[width="18"] {
  margin-left: 1px;
  margin-right: 19px;
}

.folders .selected {
  border-radius: 0 12px 12px 0;
  background: #d3e3fd;
  color: #001d35;
  font-weight: 700;
  letter-spacing: -0.25px;
}

.expandable::before {
  content: "";
  position: absolute;
  left: 17px;
  border: 4px solid transparent;
  border-left-color: #444746;
  border-right: 0;
}

.labels {
  margin: 25px 24px 0 26px;
  height: 26px;
  display: flex;
  align-items: center;
  justify-content: space-between;
  font-size: 16px;
  letter-spacing: -0.1px;
  color: #1f1f1f;
  -webkit-text-stroke: 0.2px #1f1f1f;
}

.labels span, .upgrade span, .mail-tab span {
  padding-bottom: 2px;
}

.upgrade-area {
  margin-top: auto;
  height: 58px;
  border-top: 2px solid #e8ebf0;
}

.upgrade {
  margin: 10px 0 0 20px;
  width: 215px;
  height: 32px;
  box-sizing: border-box;
  padding: 0 14px 0 16px;
  border-radius: 16px;
  background: #fff;
  display: flex;
  align-items: center;
  font-size: 14px;
}

.upgrade span {
  margin-left: 16px;
  letter-spacing: -0.25px;
}

.arrow {
  margin-left: auto;
}

main {
  width: 968px;
  height: 460px;
  border-radius: 16px;
  background: #fff;
  display: flex;
  flex-direction: column;
  overflow: hidden;
}

.list-tools {
  height: 46px;
  box-sizing: border-box;
  padding-left: 18px;
  display: flex;
  align-items: center;
}

.caret {
  border: 4px solid transparent;
  border-top-color: #444746;
  border-bottom: 0;
  margin-left: 8px;
}

.reload {
  margin: 0 22px 0 27px;
}

.tabs {
  height: 48px;
  border-bottom: 1px solid #e9ebee;
  padding-left: 8px;
  display: flex;
}

.mail-tab {
  width: 235px;
  height: 49px;
  box-sizing: border-box;
  margin-right: 18px;
  padding: 2px 0 0 8px;
  display: flex;
  align-items: center;
  font-size: 14px;
  font-weight: 500;
  letter-spacing: -0.12px;
}

.mail-tab svg {
  margin-right: 16px;
}

.current {
  border-bottom: 3px solid #0b57d0;
  border-radius: 2px;
  color: #0b57d0;
  padding-top: 5px;
}

.empty {
  margin: 75px 0 0 201px;
  font-size: 14px;
  letter-spacing: -0.26px;
  color: #5f6368;
  white-space: nowrap;
}

.empty p {
  margin: 0;
  height: 35px;
  line-height: 28px;
}

.empty .empty-title {
  height: 36px;
  font-size: 16px;
  letter-spacing: -0.44px;
}

.tabs-hint {
  letter-spacing: -0.35px;
}

.empty a {
  color: #0b57d0;
}

.footer {
  margin-top: auto;
  height: 85px;
  padding-left: 16px;
  display: flex;
  font-size: 12px;
  color: #5f6368;
}

.quota {
  width: 220px;
  height: 6px;
  margin-top: 8px;
  border-radius: 3px;
  background: #dadada;
}

.used {
  margin-top: 8px;
  display: flex;
  align-items: center;
  letter-spacing: -0.3px;
}

.used svg {
  margin: -2px 0 0 8px;
}

.terms {
  margin: 3px 0 0 149px;
  letter-spacing: -0.25px;
}

aside {
  width: 56px;
  display: flex;
  flex-direction: column;
  align-items: center;
  padding-top: 17px;
  box-sizing: border-box;
  gap: 36px;
}

aside hr {
  width: 20px;
  border: 0;
  border-top: 1px solid #dadce0;
  margin: -2px 0 0;
}

.chevron {
  margin: auto 0 22px;
}

.cal-day {
  font-size: 8px;
  font-weight: 500;
  fill: #1967d2;
}

/* compose window */
.compose {
  position: absolute;
  left: 699px;
  top: 111px;
  width: 510px;
  height: 429px;
  border-radius: 8px 8px 0 0;
  background: #fff;
  box-shadow: 0 2px 8px 1px rgba(0,0,0,0.35);
  font-size: 14px;
}

.compose-head {
  height: 40px;
  box-sizing: border-box;
  padding: 0 14px 0 16px;
  border-radius: 8px 8px 0 0;
  background: #f2f6fc;
  display: flex;
  align-items: center;
  color: #041e49;
}

.compose-head span {
  flex: 1;
  font-weight: 500;
  letter-spacing: -0.3px;
}

.compose-head svg {
  margin-left: 9px;
}

.compose-head svg:last-child {
  margin-left: 8px;
}

.field {
  margin: 0 17px 0 16px;
  box-sizing: border-box;
  border-bottom: 1px solid #e8eaed;
  display: flex;
  align-items: center;
}

.to {
  height: 40px;
  padding-bottom: 3px;
  letter-spacing: -0.3px;
}

.to span {
  padding-bottom: 1px;
}

.cursor {
  width: 1px;
  height: 17px;
  margin: 4px 0 0 9px;
  background: #000;
}

.to .cc {
  margin-left: auto;
  padding-right: 3px;
  letter-spacing: -0.2px;
}

.subject {
  height: 36px;
  color: #747775;
  letter-spacing: -0.3px;
}

.message-body {
  height: 263px;
}

.compose-tools {
  position: relative;
  display: flex;
  align-items: center;
  padding: 0 17px 0 16px;
}

.send {
  width: 105px;
  height: 36px;
  border-radius: 18px;
  background: #0b57d0;
  color: #fff;
  display: flex;
  align-items: center;
  font-weight: 600;
  letter-spacing: -0.3px;
}

.send span {
  width: 72px;
  text-align: center;
}

.send-more {
  flex: 1;
  height: 36px;
  border-left: 1px solid #063b91;
  display: flex;
  align-items: center;
}

.send-more .caret {
  margin-left: 11px;
  border-top-color: #fff;
}

.icons {
  display: flex;
  gap: 12px;
  margin: -2px 0 0 12px;
}

.discard {
  margin: -2px 0 0 auto;
}

.new-dot {
  position: absolute;
  left: 405px;
  top: 4px;
  width: 6px;
  height: 6px;
  border-radius: 50%;
  background: #1a73e8;
}

.tip {
  position: absolute;
  left: 41px;
  top: 234px;
  width: 224px;
  height: 130px;
  box-sizing: border-box;
  padding: 17px 16px;
  border-radius: 8px;
  background: #4f92ec;
  color: #fff;
  line-height: 20px;
  white-space: nowrap;
  box-shadow: 0 1px 4px rgba(60,64,67,0.25);
}

.tip::after {
  content: "";
  position: absolute;
  left: 55px;
  top: 130px;
  border: 9px solid transparent;
  border-top-color: #4f92ec;
  border-bottom: 0;
}

.tip-title {
  font-size: 16px;
  font-weight: 600;
  letter-spacing: -0.25px;
}

.tip-text {
  margin-top: 7px;
  color: #edf4ff;
  letter-spacing: -0.32px;
}

.tip-dismiss {
  margin-top: 9px;
  font-weight: 600;
  letter-spacing: -0.35px;
}

/* windows taskbar */
.taskbar {
  height: 40px;
  background: linear-gradient(90deg, #03161f, #020d1c);
  color: #fff;
  display: flex;
  flex-shrink: 0;
  position: relative;
}

.start {
  width: 48px;
  display: flex;
  align-items: center;
  justify-content: center;
}

.task-search {
  width: 288px;
  box-sizing: border-box;
  border: 1px solid #b8b8b8;
  background: #f1f1f1;
  color: #333;
  font-size: 15px;
  letter-spacing: -0.52px;
  padding-left: 11px;
  display: flex;
  align-items: center;
}

.task-search span {
  margin-left: 10px;
}

.flowers {
  margin-left: auto;
}

.task-item {
  width: 48px;
  margin-right: 1px;
  display: flex;
  align-items: center;
  justify-content: center;
}

.view {
  margin-right: 3px;
}

.running {
  box-sizing: border-box;
  background: #34444f;
  border-bottom: 2px solid #76b9ed;
  padding-top: 2px;
}

.tray {
  margin-left: auto;
  display: flex;
  align-items: center;
  gap: 8px;
  border-right: 1px solid #66717a;
  padding-right: 19px;
  margin-right: 4px;
}

.tray > svg:first-child {
  margin-right: 4px;
}

.clock {
  width: 52px;
  font-size: 12px;
  line-height: 18px;
  letter-spacing: -0.55px;
  text-align: center;
}

.notes {
  margin-left: 8px;
}

/* recorder logo in the corner */
.watermark {
  position: absolute;
  left: 1040px;
  top: 609px;
  display: flex;
  align-items: center;
  color: rgba(255,255,255,0.65);
  font: 400 46px Roboto, sans-serif;
  filter: drop-shadow(0 0 1px rgba(60,60,60,0.6));
}

.watermark span {
  display: block;
  width: 68px;
  transform: scaleX(0.76);
  transform-origin: left;
}

.watermark svg path {
  stroke: rgba(255,255,255,0.7);
  stroke-width: 3.5;
}
```
